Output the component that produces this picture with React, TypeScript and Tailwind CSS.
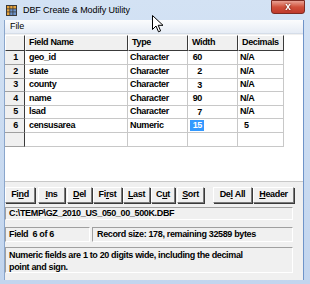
import React from "react";

const fields = [
	{ name: "geo_id", type: "Character", width: "60", dec: "N/A", h: "h-[14px]" },
	{ name: "state", type: "Character", width: "2", dec: "N/A", h: "h-[14px]" },
	{ name: "county", type: "Character", width: "3", dec: "N/A", h: "h-[13px]" },
	{ name: "name", type: "Character", width: "90", dec: "N/A", h: "h-[14px]" },
	{ name: "lsad", type: "Character", width: "7", dec: "N/A", h: "h-[13px]" },
	{ name: "censusarea", type: "Numeric", width: "15", dec: "5", h: "h-[14px]" },
];

const TableIcon = () => (
	<svg width="11" height="11" viewBox="0 0 11 11">
		<rect x="0.5" y="0.5" width="10" height="10" fill="#ffffff" stroke="#3a3a3a" />
		<rect x="1" y="1" width="3" height="3" fill="#e8a33a" />
		<rect x="4" y="1" width="3" height="3" fill="#e8a33a" />
		<rect x="7" y="1" width="3" height="3" fill="#e8a33a" />
		<rect x="1" y="4" width="3" height="6" fill="#e8a33a" />
		<rect x="4" y="4" width="6" height="6" fill="#6d93c9" />
		<path d="M0.5 3.8H10.5M0.5 6.9H10.5M3.8 0.5V10.5M6.9 0.5V10.5" stroke="#3a3a3a" strokeWidth="0.8" />
	</svg>
);

const Cursor = () => (
	<svg width="12" height="18" viewBox="0 0 12 18" className="absolute left-[152px] top-[15px]">
		<path d="M0.5 0.5V14.5L4 11L6.5 16.8L8.6 15.9L6.2 10.3H11L0.5 0.5Z" fill="#ffffff" stroke="#000000" strokeWidth="1" strokeLinejoin="round" />
	</svg>
);

const Btn = ({ w, children, className = "" }: { w: string; children: React.ReactNode; className?: string }) => (
	<div
		className={`${w} ${className} h-[16px] flex items-center justify-center bg-[#f0f0f0] border border-t-white border-l-white border-r-[#7a7a7a] border-b-[#7a7a7a] shadow-[1px_1px_0_#3a3a3a]`}
	>
		{children}
	</div>
);

const HeaderCell = ({ w, children }: { w: string; children?: React.ReactNode }) => (
	<div className={`${w} h-full bg-[#f0f0f0] border-t border-l border-t-white border-l-white border-r border-b border-r-[#3a3a3a] border-b-[#3a3a3a] pl-[3px] flex items-center`}>
		{children}
	</div>
);

export default function App() {
	return (
		<div className="relative w-[310px] h-[284px] overflow-hidden bg-gradient-to-b from-[#d3e2f4] to-[#c2d5ee] font-['Liberation_Sans',Arial,sans-serif] text-black">
			{/* title bar */}
			<div className="h-[20px] flex items-start">
				<div className="ml-[6px] mt-[5px]">
					<TableIcon />
				</div>
				<span className="ml-[6px] mt-[4px] text-[9px] leading-[12px] tracking-[-0.1px]">DBF Create &amp; Modify Utility</span>
				<div className="ml-auto mr-[5px] w-[34px] h-[14px] rounded-b-[3px] border border-[#7d2b22] bg-gradient-to-b from-[#e8a093] via-[#d0503b] to-[#c0392b] flex items-center justify-center">
					<span className="text-white text-[10px] font-bold leading-none drop-shadow-[0_0_1px_#5a1a10]">x</span>
				</div>
			</div>

			<div className="flex ml-[4px] mr-[6px] border-l border-l-[#8aa6cc] border-r border-r-[#6f94c9]">
				<div className="w-[298px] h-[260px] bg-[#f0f0f0] flex flex-col text-[9px] font-bold tracking-[-0.35px]">
					{/* menu */}
					<div className="h-[14px] bg-gradient-to-b from-[#fbfcfd] to-[#e6ecf5] border-b border-b-[#d5dde8] flex items-center pl-[5px] font-normal tracking-[-0.1px]">
						File
					</div>

					{/* grid */}
					<div className="mt-[1px] h-[147px] bg-white border-b border-b-[#c8c8c8]">
						<div className="flex h-[16px]">
							<HeaderCell w="w-[20px]" />
							<HeaderCell w="w-[103px]">Field Name</HeaderCell>
							<HeaderCell w="w-[60px]">Type</HeaderCell>
							<HeaderCell w="w-[50px]">Width</HeaderCell>
							<HeaderCell w="w-[46px]">Decimals</HeaderCell>
						</div>
						{fields.map((f, i) => (
							<div key={f.name} className={`flex ${f.h}`}>
								<div className="w-[20px] h-full bg-[#f0f0f0] border-r border-r-[#3a3a3a] border-b border-b-[#a0a0a0] flex items-center justify-end pr-[6px]">
									{i + 1}
								</div>
								<div className="w-[103px] h-full border-r border-b border-[#c8c8c8] flex items-center pl-[4px]">{f.name}</div>
								<div className="w-[60px] h-full border-r border-b border-[#c8c8c8] flex items-center pl-[2px]">{f.type}</div>
								<div className="w-[50px] h-full border-r border-b border-[#c8c8c8] flex items-center pl-[2px]">
									<span
										className={`inline-block w-[14px] h-[11px] leading-[11px] text-right pr-[2px] ${
											i === 5 ? "bg-[#3399ff] text-white" : ""
										}`}
									>
										{f.width}
									</span>
								</div>
								<div className={`w-[46px] h-full border-r border-b border-[#c8c8c8] flex items-center ${i === 5 ? "pl-[6px]" : "pl-[2px]"}`}>
									{f.dec}
								</div>
							</div>
						))}
						<div className="flex h-[14px]">
							<div className="w-[20px] h-full bg-[#f0f0f0] border-r border-r-[#3a3a3a] border-b border-b-[#a0a0a0]" />
							<div className="w-[103px] h-full border-r border-b border-[#c8c8c8]" />
							<div className="w-[60px] h-full border-r border-b border-[#c8c8c8]" />
							<div className="w-[50px] h-full border-r border-b border-[#c8c8c8]" />
							<div className="w-[46px] h-full border-r border-b border-[#c8c8c8]" />
						</div>
					</div>

					{/* buttons */}
					<div className="mt-[5px] flex items-center">
						<Btn w="w-[30px]">
							Fi<span className="underline">n</span>d
						</Btn>
						<Btn w="w-[27px]" className="ml-[3px]">
							<span className="underline">I</span>ns
						</Btn>
						<Btn w="w-[25px]" className="ml-[2px]">
							<span className="underline">D</span>el
						</Btn>
						<Btn w="w-[29px]" className="ml-[1px]">
							Fi<span className="underline">r</span>st
						</Btn>
						<Btn w="w-[27px]" className="ml-[1px]">
							<span className="underline">L</span>ast
						</Btn>
						<Btn w="w-[24px]" className="ml-[1px]">
							C<span className="underline">u</span>t
						</Btn>
						<Btn w="w-[27px]" className="ml-[2px]">
							<span className="underline">S</span>ort
						</Btn>
						<Btn w="w-[39px]" className="ml-[9px]">
							De<span className="underline">l</span>&nbsp;All
						</Btn>
						<Btn w="w-[41px]" className="ml-[1px]">
							<span className="underline">H</span>eader
						</Btn>
					</div>

					{/* path */}
					<div className="mt-[4px] w-[288px] h-[13px] border border-t-[#a0a0a0] border-l-[#a0a0a0] border-r-white border-b-white flex items-center pl-[3px]">
						C:\TEMP\GZ_2010_US_050_00_500K.DBF
					</div>

					{/* status */}
					<div className="mt-[7px] flex h-[15px]">
						<div className="w-[85px] h-full border border-t-[#a0a0a0] border-l-[#a0a0a0] border-r-white border-b-white flex items-center pl-[3px]">
							Field&nbsp; 6 of 6
						</div>
						<div className="ml-[2px] w-[201px] h-full border border-t-[#a0a0a0] border-l-[#a0a0a0] border-r-white border-b-white flex items-center pl-[4px]">
							Record size: 178, remaining 32589 bytes
						</div>
					</div>

					{/* message */}
					<div className="mt-[5px] w-[288px] h-[26px] border border-t-[#a0a0a0] border-l-[#a0a0a0] border-r-white border-b-white pl-[3px] pt-[1px] leading-[12px]">
						Numeric fields are 1 to 20 digits wide, including the decimal
						<br />
						point and sign.
					</div>
				</div>
			</div>

			<Cursor />
		</div>
	);
}
